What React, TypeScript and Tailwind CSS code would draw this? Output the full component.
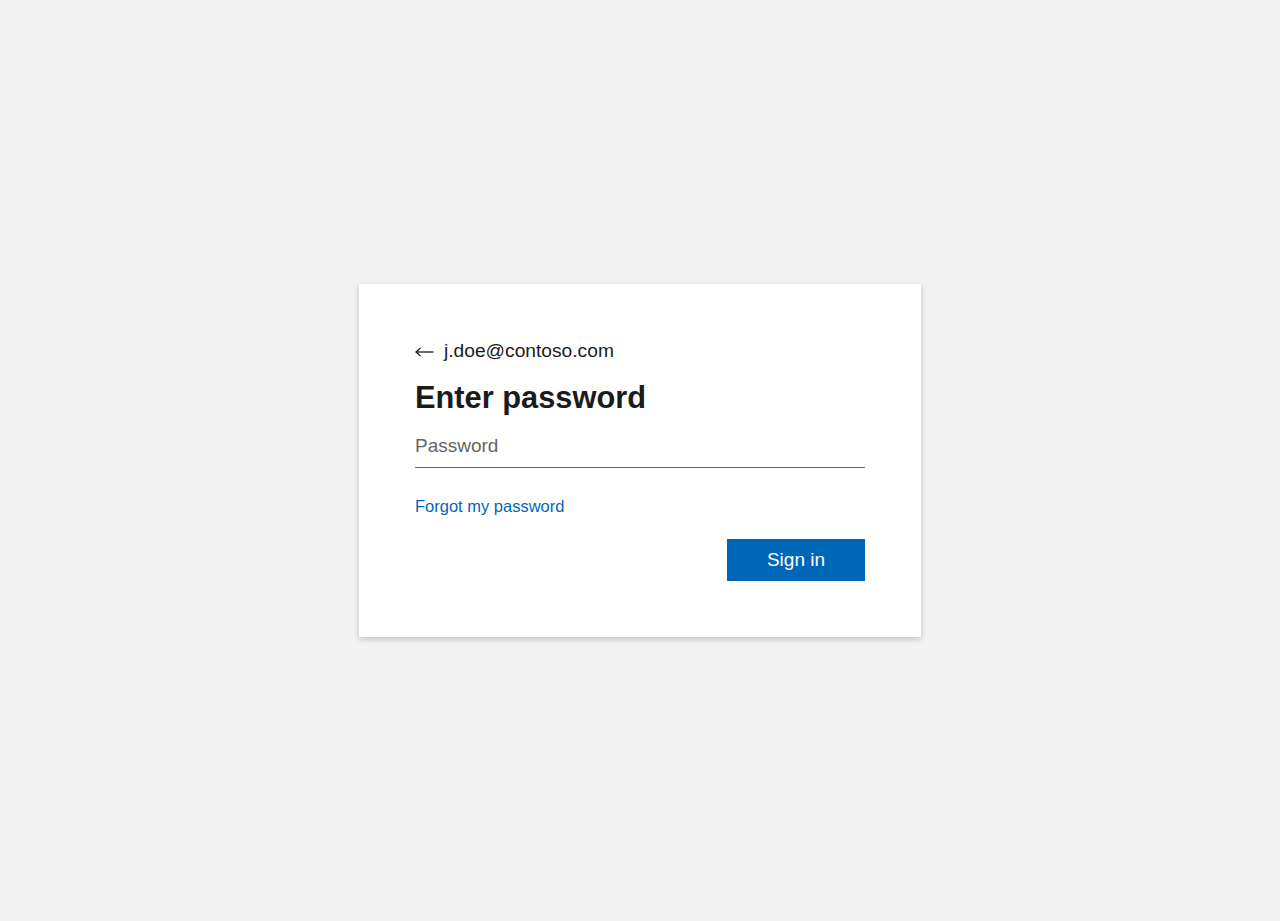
import React from "react";

export default function App() {
  return (
    <div
      className="flex min-h-screen w-full items-center justify-center bg-[#f2f2f2]"
      style={{ fontFamily: '"Liberation Sans", Arial, sans-serif' }}
    >
      <div className="w-[562px] h-[353px] bg-white px-[56px] pt-[55px] shadow-[0_2px_6px_rgba(0,0,0,0.2)]">
        <div className="flex h-[24px] items-center text-[19.2px] leading-[24px] text-[#1b1b1b]">
          <svg width="19" height="10" viewBox="0 0 19 10" className="mr-[10px] mt-[1px]" fill="none">
            <path d="M1 5 H18.5" stroke="#1b1b1b" strokeWidth="1.3" />
            <path d="M5.5 1 L1 5 L5.5 9" stroke="#1b1b1b" strokeWidth="1.3" strokeLinejoin="miter" />
          </svg>
          <span>j.doe@contoso.com</span>
        </div>
        <h1 className="mt-[16px] h-[38px] text-[30.8px] font-bold leading-[38px] text-[#1b1b1b]">
          Enter password
        </h1>
        <input
          type="password"
          placeholder="Password"
          className="mt-[10px] block h-[41px] w-full border-b border-[#666666] bg-transparent p-0 pb-[2px] text-[19px] text-[#1b1b1b] outline-none placeholder:text-[#666666]"
        />
        <div className="mt-[26px] h-[24px] text-[16.5px] leading-[24px]">
          <a href="#" className="text-[#0067b8]">
            Forgot my password
          </a>
        </div>
        <div className="mt-[21px] flex justify-end">
          <button className="h-[42px] w-[138px] bg-[#0067b8] text-[19px] text-white">
            Sign in
          </button>
        </div>
      </div>
    </div>
  );
}
